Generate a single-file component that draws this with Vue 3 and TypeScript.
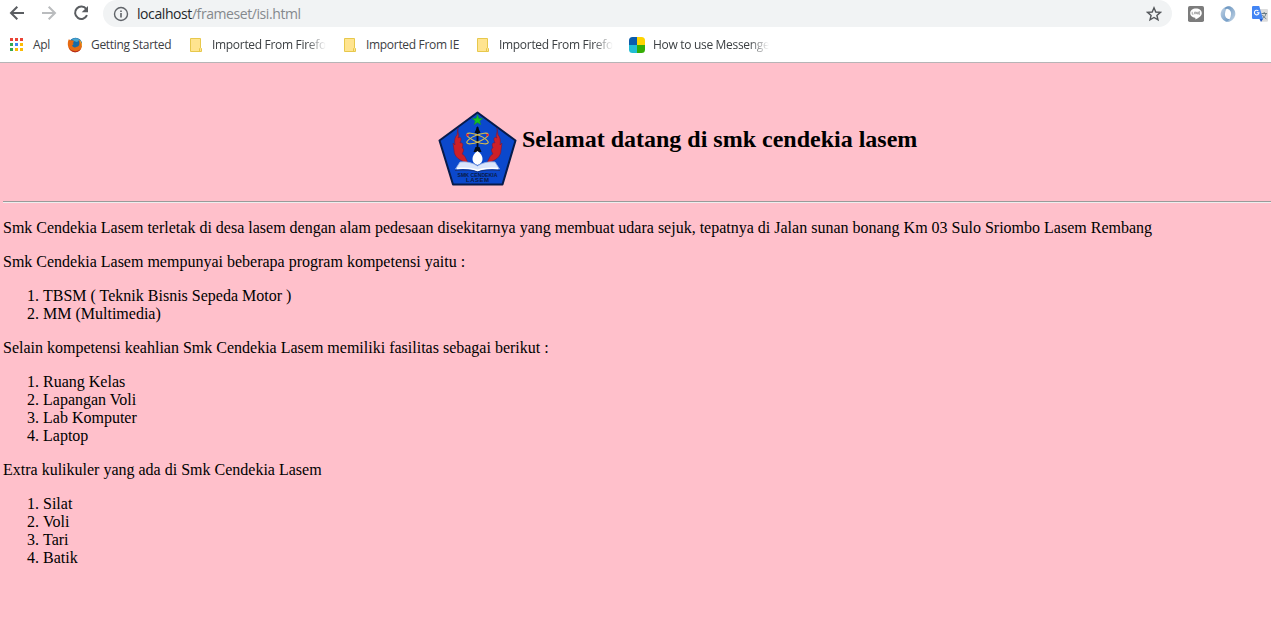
<script setup lang="ts">
interface Bookmark { label: string; icon: 'apps' | 'firefox' | 'folder' | 'messenger'; cls: string; fade?: boolean }
interface Section { intro: string; cls: string; items: string[] }

const bookmarks: Bookmark[] = [
  { label: 'Apl', icon: 'apps', cls: 'b-apps' },
  { label: 'Getting Started', icon: 'firefox', cls: 'b-start' },
  { label: 'Imported From Firefo', icon: 'folder', cls: 'b-ff', fade: true },
  { label: 'Imported From IE', icon: 'folder', cls: 'b-ie' },
  { label: 'Imported From Firefo', icon: 'folder', cls: 'b-ff2', fade: true },
  { label: 'How to use Messenge', icon: 'messenger', cls: 'b-msg', fade: true },
]
const dots = ['#ea4335', '#ea4335', '#ea4335', '#34a853', '#4285f4', '#fbbc05', '#34a853', '#fbbc05', '#fbbc05']

const sections: Section[] = [
  { intro: 'Smk Cendekia Lasem mempunyai beberapa program kompetensi yaitu :', cls: 's1', items: ['TBSM ( Teknik Bisnis Sepeda Motor )', 'MM (Multimedia)'] },
  { intro: 'Selain kompetensi keahlian Smk Cendekia Lasem memiliki fasilitas sebagai berikut :', cls: 's2', items: ['Ruang Kelas', 'Lapangan Voli', 'Lab Komputer', 'Laptop'] },
  { intro: 'Extra kulikuler yang ada di Smk Cendekia Lasem', cls: 's3', items: ['Silat', 'Voli', 'Tari', 'Batik'] },
]
</script>

<template>
  <div class="window">
    <header class="chrome">
      <div class="toolbar">
        <svg class="nav" width="96" height="27" viewBox="0 0 96 27" fill="none" stroke-width="2">
          <path d="M24 13H11.5M17.3 6.7 11 13l6.3 6.3" stroke="#5a5d61" />
          <path d="M42 13h12.5M48.7 6.7 55 13l-6.3 6.3" stroke="#babcbe" />
          <path d="M86.3 9.1A6.2 6.2 0 1 0 87 15.2" stroke="#5a5d61" />
          <path d="M88 6v6.3h-6.3z" fill="#5a5d61" />
        </svg>
        <div class="omnibox">
          <svg class="info" width="16" height="16" viewBox="0 0 16 16">
            <circle cx="8" cy="8" r="6.5" fill="none" stroke="#5f6368" stroke-width="1.4" />
            <path d="M7.2 7h1.6v4.5H7.2zM7.2 4.400h1.6v1.5H7.200z" fill="#5f6368" />
          </svg>
          <span class="url">localhost<span class="path">/frameset/isi.html</span></span>
          <svg class="star" width="16" height="16" viewBox="0 0 16 16">
            <path d="M8 1.8 9.8 6l4.6.4-3.5 3 1.1 4.5L8 11.5l-4 2.4 1.1-4.5-3.5-3L6.2 6z" fill="none" stroke="#54575b" stroke-width="1.4" />
          </svg>
        </div>
        <svg class="ext" width="16" height="16" viewBox="0 0 16 16">
          <rect width="16" height="16" rx="1.8" fill="#7c7c7c" />
          <path d="M8 2.6c-3.400 0-5.800 2-5.800 4.700 0 2.400 2 4.100 4.800 4.500.7.2.4 1 .3 1.800 2.700-1.200 6.500-3.500 6.500-6.300 0-2.700-2.500-4.700-5.800-4.700z" fill="#fff" />
          <path d="M4.2 5.800v2.400h1.300M6.600 5.800v2.400M7.800 8.200V5.800l1.500 2.400V5.800M12 5.800h-1.300v2.400H12M10.700 7H12" fill="none" stroke="#858585" stroke-width=".7" />
        </svg>
        <svg class="ext" width="16" height="16" viewBox="0 0 16 16">
          <defs>
            <linearGradient id="ringA" x1="0" y1="0" x2="1" y2="1"><stop stop-color="#c7d7e7" /><stop offset="1" stop-color="#5d8dbe" /></linearGradient>
            <linearGradient id="ringB" x1="0" y1="0" x2="1" y2="1"><stop stop-color="#5c8bba" /><stop offset="1" stop-color="#c7d7e7" /></linearGradient>
          </defs>
          <path d="M9.500.2A8 8 0 0 0 6 15.700C9 16 11 14.500 11.500 13 7 14 4.500 11 5 7.500 5.300 4 7 1.500 9.500.2z" fill="url(#ringA)" />
          <path d="M6.500 15.800A8 8 0 0 0 10 .3C7 0 5 1.500 4.500 3 9 2 11.500 5 11 8.500 10.700 12 9 14.500 6.500 15.800z" fill="url(#ringB)" />
        </svg>
        <svg class="ext" width="16" height="16" viewBox="0 0 16 16">
          <path d="M6 3h9.200l.8.8V15l-.8.8H9.500z" fill="#dcdcdc" />
          <path d="M9.500 7.500H15M12.200 6v1.500M14 7.500c-.5 2.500-2 4-3.500 5M10.500 9c1 2 2.500 3 3.800 3.800" fill="none" stroke="#667a85" stroke-width="1" />
          <path d="M.8 0h6.400L11 13H.8L0 12.200V.8z" fill="#4285f4" />
          <path d="M7.500 13H11l-2 3z" fill="#2455bd" />
          <path d="M6.400 5A2.300 2.300 0 1 0 7 6.800H4.800" fill="none" stroke="#fff" stroke-width="1.100" />
        </svg>
      </div>

      <nav class="bookmarks">
        <a v-for="(b, i) in bookmarks" :key="i" class="bookmark" :class="b.cls">
          <svg v-if="b.icon === 'apps'" width="16" height="16" viewBox="0 0 16 16">
            <rect v-for="(c, n) in dots" :key="n" :x="2 + (n % 3) * 5" :y="1 + Math.floor(n / 3) * 5" width="3" height="3" :fill="c" />
          </svg>
          <svg v-else-if="b.icon === 'firefox'" width="16" height="16" viewBox="0 0 16 16">
            <circle cx="8.500" cy="7.200" r="6.500" fill="#176ba8" />
            <path d="M5 2.500C7 .8 11 .8 12.500 3L10 5 7 4z" fill="#48a5cf" />
            <path d="M1.800 2.200 4 3.500c1.300-.4 2.300.2 3 .8L5.800 6.200l1 .9-1.600 1.100C5.300 10.300 8 11 9.700 9.800c1.800.1 3-1.700 2.600-4.600l-.7-2.400c3 2 3.700 4 3.300 6.800A7 7 0 0 1 1.300 10C.4 7.500.8 4.500 1.800 2.200z" fill="#e66a12" />
            <path d="M12 2.500c2.800 2.300 3.400 5.300 1.700 8.300 1-3 .1-5.500-1.700-8.300z" fill="#ffca35" />
            <path d="M1.300 9.500C3.500 14.500 10 16 14 11.500 11.500 17 3.500 16.500 1.300 9.500z" fill="#b32921" />
          </svg>
          <svg v-else-if="b.icon === 'folder'" width="16" height="16" viewBox="0 0 16 16">
            <path d="M2.500 1.500h10v9.300l1 .7v3h-11z" fill="#ffe48f" stroke="#e7c84c" />
            <path d="M11.500 14v-2.500l1-1" fill="none" stroke="#e7c84c" />
          </svg>
          <svg v-else width="16" height="16" viewBox="0 0 16 16">
            <path d="M8 0v8H0V3.500Q0 0 3.500 0z" fill="#0b5cab" />
            <path d="M8 0h4.500Q16 0 16 3.500V8H8z" fill="#ffd400" />
            <path d="M0 8h8v8H3.500Q0 16 0 12.500z" fill="#21bdd3" />
            <path d="M8 8h8v4.500q0 3.500-3.500 3.500H8z" fill="#35ad05" />
          </svg>
          <span class="label" :class="{ fade: b.fade }">{{ b.label }}</span>
        </a>
      </nav>
    </header>

    <main class="page">
      <div class="banner">
        <svg class="crest" width="80" height="78" viewBox="0 0 80 78">
          <path d="M39.500 2.500 77.500 30.500 64.500 74.500H15L1.500 30.500z" fill="#0b48cc" stroke="#071b4b" stroke-width="2" stroke-linejoin="round" />
          <path d="M39.500 17v28" stroke="#050b18" stroke-width="1.800" />
          <path d="m39.500 16 3 7h-6zM37.500 37h4l2 5h-8z" fill="#050b18" />
          <g fill="none" stroke="#d8bd4c" stroke-width="1.100">
            <ellipse cx="39.500" cy="28.500" rx="11.500" ry="3.400" transform="rotate(22 39.500 28.500)" />
            <ellipse cx="39.500" cy="28.500" rx="11.500" ry="3.400" transform="rotate(-22 39.500 28.500)" />
          </g>
          <path d="m39.500 4.500 1.400 3.900h3.900l-3.100 2.500 1.200 3.800-3.400-2.300-3.400 2.300 1.200-3.800-3.100-2.500h3.900z" fill="#16c51d" stroke="#158d2e" stroke-width=".5" />
          <path d="M20 18c-1 5 2 6 0 10 3-2 4 1 2 5 2-1 4 1 2 5 2 0 2 3 0 6 3 1 4 5 6 9-8-2-14-6-14-13l-1-7 2 2c-1-5 0-8 2-10zM59 18c1 5-2 6 0 10-3-2-4 1-2 5-2-1-4 1-2 5-2 0-2 3 0 6-3 1-4 5-6 9 8-2 14-6 14-13l1-7-2 2c1-5 0-8-2-10z" fill="#ce2028" stroke="#721941" stroke-width=".6" />
          <circle cx="29.500" cy="25" r="1.300" fill="#ea2031" /><circle cx="49.500" cy="25" r="1.300" fill="#ea2031" />
          <path d="M22 52q10-1 17.500 4Q47 51 57 52l4.500 7q-14-1-22 2Q32 57 17.500 59z" fill="#d9e5fb" stroke="#94aee4" stroke-width=".8" />
          <path d="M19 58.500q13-1 20.500 2Q47 57.500 60 58.500" fill="none" stroke="#fff" stroke-width="1.600" />
          <path d="M39.500 41q5 3.500 5 8t-5 6q-5-1.500-5-6t5-8z" fill="#fff" />
          <path d="M17 60.500q15-1.500 22.500 1.500Q47 59 62 60.500" fill="none" stroke="#18347e" stroke-width="1" />
          <text class="crest-text" x="39.500" y="66.800" textLength="40" lengthAdjust="spacingAndGlyphs">SMK CENDEKIA</text>
          <text class="crest-text" x="39.500" y="72.300" textLength="23" lengthAdjust="spacing">LASEM</text>
        </svg>
        <h2 class="title">Selamat datang di smk cendekia lasem</h2>
      </div>
      <hr class="rule" />
      <p class="lead">Smk Cendekia Lasem terletak di desa lasem dengan alam pedesaan disekitarnya yang membuat udara sejuk, tepatnya di Jalan sunan bonang Km 03 Sulo Sriombo Lasem Rembang</p>
      <section v-for="s in sections" :key="s.cls" :class="s.cls">
        <p>{{ s.intro }}</p>
        <ol><li v-for="item in s.items" :key="item">{{ item }}</li></ol>
      </section>
    </main>
  </div>
</template>

<style>
body { margin: 0; overflow: hidden; }
</style>

<style scoped>
.window { width: 1271px; height: 625px; overflow: hidden; display: flex; flex-direction: column; background: #fff; }
.chrome { height: 62px; flex: none; border-bottom: 1px solid #b6b4b6; font-family: "Open Sans", sans-serif; }
.toolbar { display: flex; height: 27px; align-items: center; }
.nav { flex: none; margin-right: 7px; }
.omnibox { box-sizing: border-box; width: 1069px; height: 27px; flex: none; display: flex; align-items: center; background: #f1f3f4; border-radius: 14px; padding: 0 10px; margin-right: 16px; }
.info { flex: none; margin-right: 8px; }
.url { font-size: 14px; line-height: 20px; color: #25282b; white-space: nowrap; letter-spacing: -.42px; }
.path { color: #85898d; }
.star { margin-left: auto; }
.ext { flex: none; margin-right: 16px; }
.bookmarks { display: flex; height: 35px; padding-left: 8px; align-items: center; }
.bookmark { display: flex; flex: none; align-items: center; height: 16px; color: #3c4043; font-size: 12px; line-height: 16px; }
.bookmark svg { flex: none; margin-right: 8px; }
.label { white-space: nowrap; letter-spacing: -.31px; }
.fade { mask-image: linear-gradient(to right, #000 calc(100% - 20px), transparent); }
.b-apps { width: 59px; }
.b-apps svg { margin-right: 9px; }
.b-start { width: 121px; }
.b-ff { width: 154px; }
.b-ie { width: 133px; }
.b-ff2 { width: 154px; }

.page { flex: 1; min-height: 0; padding-left: 3px; background: #ffc0cb; color: #000; font-family: "Liberation Serif", serif; font-size: 16px; line-height: 18px; }
.banner { display: flex; height: 91px; padding: 47px 0 0 435px; }
.crest { flex: none; margin-right: 4px; }
.crest-text { font: bold 6px "Liberation Sans", sans-serif; fill: #0a1b47; text-anchor: middle; }
.title { margin: 16px 0 0; font-size: 24px; line-height: 27px; font-weight: bold; white-space: nowrap; }
.rule { margin: 0 0 16px; border: 0; border-top: 1px solid #9a9a9a; border-bottom: 1px solid #eee; }
p { margin: 0 0 16px; white-space: nowrap; }
ol { margin: 0 0 16px; padding-left: 40px; }
</style>
